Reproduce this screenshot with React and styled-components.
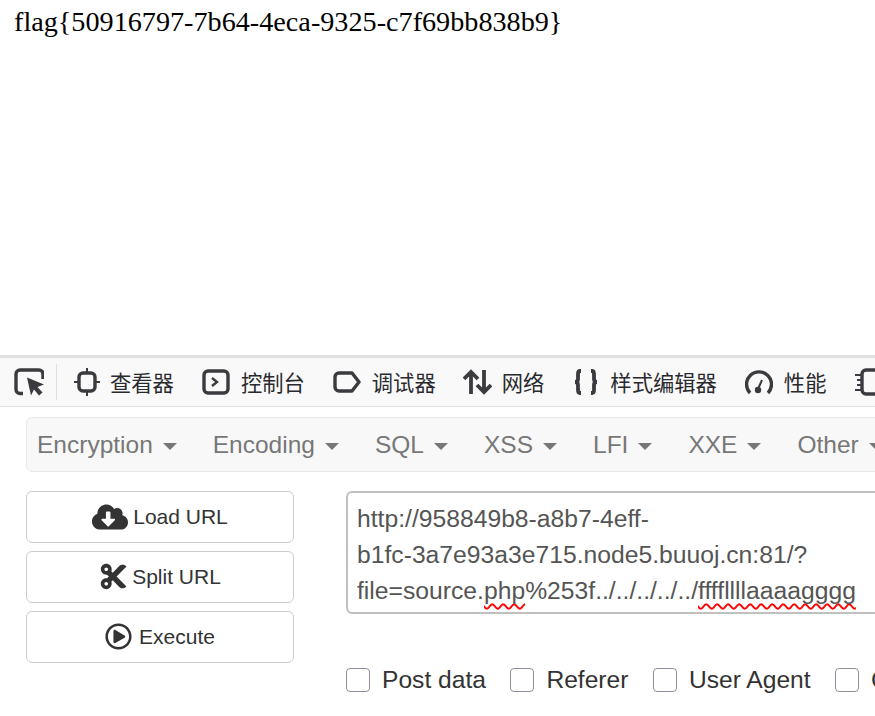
import React from "react";
import styled, { createGlobalStyle } from "styled-components";
import { FaCloudDownloadAlt, FaCut, FaRegPlayCircle } from "react-icons/fa";

const Global = createGlobalStyle`
  html, body {
    margin: 0;
    width: 875px;
    height: 716px;
    overflow: hidden;
    background: #fff;
  }
`;
const Page = styled.div`
  width: 875px;
  height: 716px;
  overflow: hidden;
`;
const Flag = styled.div`
  height: 355px;
  box-sizing: border-box;
  padding: 6px 0 0 14px;
  font: 28.2px/32px "Liberation Serif", serif;
  color: #000;
`;
const Devtools = styled.div`
  display: flex;
  align-items: center;
  height: 52px;
  box-sizing: border-box;
  border-top: 3px solid #e0e0e2;
  border-bottom: 1px solid #e0e0e2;
  background: #f9f9fa;
  padding-left: 14px;
  white-space: nowrap;
  svg {
    flex: none;
    display: block;
  }
`;
const Divider = styled.div`
  width: 1px;
  height: 36px;
  background: #e0e0e2;
  margin: 0 16px 0 12px;
  flex: none;
`;
const Tool = styled.div`
  display: flex;
  align-items: center;
  flex: none;
  gap: ${(p) => p.$gap}px;
  margin-right: ${(p) => p.$after}px;
  font: 21.3px "Noto Sans CJK SC", sans-serif;
  color: #2a2a2e;
`;
const ToolLabel = styled.span`
  padding-bottom: 2px;
`;
const Nav = styled.div`
  display: flex;
  align-items: center;
  gap: 36px;
  margin: 10px 0 19px 26px;
  width: 900px;
  height: 55px;
  box-sizing: border-box;
  padding-left: 10px;
  background: #f8f8f8;
  border: 1px solid #e7e7e7;
  border-radius: 6px;
  white-space: nowrap;
`;
const NavItem = styled.div`
  display: flex;
  align-items: center;
  gap: 10px;
  flex: none;
  font: 24.5px "Liberation Sans", sans-serif;
  color: #777;
`;
const Caret = styled.span`
  width: 0;
  height: 0;
  margin-top: 3px;
  border-top: 7px solid #777;
  border-left: 7px solid transparent;
  border-right: 7px solid transparent;
`;
const Main = styled.div`
  display: flex;
  gap: 52px;
  padding-left: 26px;
`;
const Buttons = styled.div`
  display: flex;
  flex-direction: column;
  gap: 8.5px;
  width: 268px;
  flex: none;
`;
const Button = styled.div`
  display: flex;
  align-items: center;
  justify-content: center;
  gap: ${(p) => p.$gap}px;
  height: 51.5px;
  box-sizing: border-box;
  border: 1px solid #ccc;
  border-radius: 6px;
  background: #fff;
  font: 21px "Liberation Sans", sans-serif;
  color: #333;
`;
const Right = styled.div`
  flex: none;
  width: 560px;
`;
const UrlBox = styled.div`
  height: 123px;
  box-sizing: border-box;
  padding: 8px 0 0 9px;
  border: 2px solid #c0c0c0;
  border-radius: 6px;
  font: 24.7px/36px "Liberation Sans", sans-serif;
  color: #555;
`;
const UrlLine = styled.div`
  white-space: nowrap;
`;
const Typo = styled.span`
  text-decoration: underline wavy #f00;
  text-decoration-thickness: 1.5px;
  text-decoration-skip-ink: none;
  text-underline-offset: 4px;
`;
const Options = styled.div`
  display: flex;
  gap: 24.5px;
  margin-top: 52px;
  white-space: nowrap;
`;
const Option = styled.label`
  display: flex;
  align-items: center;
  gap: 12px;
  flex: none;
  font: 24.6px "Liberation Sans", sans-serif;
  color: #333;
`;
const Box = styled.span`
  width: 24px;
  height: 24px;
  box-sizing: border-box;
  border: 1px solid #8f8f9d;
  border-radius: 4px;
  background: #fff;
`;

const ic = { fill: "none", stroke: "#3b3b3f", strokeWidth: 3.4 };

const PickIcon = () => (
  <svg width="30" height="28" viewBox="0 0 30 28">
    <path d="M9 25.5H6a4 4 0 0 1-4-4V6a4 4 0 0 1 4-4h19a4 4 0 0 1 4 4v5" {...ic} />
    <path d="M13 9.5l17 7-6.5 2.5 5 5.500-3.500 3-5-6-3 6z" fill="#3b3b3f" />
  </svg>
);
const InspectIcon = () => (
  <svg width="28" height="28" viewBox="0 0 28 28">
    <rect x="6" y="5" width="16" height="18" rx="4" {...ic} />
    <path d="M14 0v5M14 23v5M1 14h5M22 14h5" {...ic} strokeWidth="2" />
  </svg>
);
const ConsoleIcon = () => (
  <svg width="28" height="26" viewBox="0 0 28 26">
    <rect x="2" y="2" width="24" height="22" rx="4" {...ic} />
    <path d="M10 9l5 4-5 4" {...ic} strokeWidth="2.4" />
  </svg>
);
const DebugIcon = () => (
  <svg width="28" height="22" viewBox="0 0 28 22">
    <path d="M6 2h13l7 9-7 9H6a4 4 0 0 1-4-4V6a4 4 0 0 1 4-4z" {...ic} strokeLinejoin="round" />
  </svg>
);
const NetIcon = () => (
  <svg width="29" height="26" viewBox="0 0 29 26">
    <path d="M8 25V3M1 10l7-7 7 7" {...ic} strokeWidth="3.8" />
    <path d="M21 1v22M14 16l7 7 7-7" {...ic} strokeWidth="3.8" />
  </svg>
);
const StyleIcon = () => (
  <svg width="26" height="26" viewBox="0 0 26 26">
    <path d="M8 2H7C5 2 5 4 5 5v5c0 2-1 3-3 3 2 0 3 1 3 3v5c0 1 0 3 2 3h1" {...ic} strokeWidth="3.8" />
    <path d="M18 2h1c2 0 2 2 2 3v5c0 2 1 3 3 3-2 0-3 1-3 3v5c0 1 0 3-2 3h-1" {...ic} strokeWidth="3.8" />
  </svg>
);
const PerfIcon = () => (
  <svg width="28" height="26" viewBox="0 0 28 26">
    <path d="M5 24A12.500 12.500 0 1 1 23 24" {...ic} />
    <circle cx="13" cy="21" r="3.200" fill="#3b3b3f" />
    <path d="M13 20l4-9" {...ic} strokeWidth="2" />
  </svg>
);
const MemIcon = () => (
  <svg width="30" height="28" viewBox="0 0 30 28">
    <rect x="8" y="2" width="18" height="24" rx="4" {...ic} />
    <path d="M1 7h7M3 12h5M3 17h5M1 22h7" {...ic} strokeWidth="2" />
  </svg>
);

const tools = [
  { Icon: InspectIcon, label: "查看器", gap: 9, after: 28 },
  { Icon: ConsoleIcon, label: "控制台", gap: 11, after: 28 },
  { Icon: DebugIcon, label: "调试器", gap: 11, after: 27 },
  { Icon: NetIcon, label: "网络", gap: 10, after: 29 },
  { Icon: StyleIcon, label: "样式编辑器", gap: 11, after: 28 },
  { Icon: PerfIcon, label: "性能", gap: 11, after: 28 },
  { Icon: MemIcon, label: "内存", gap: 11, after: 28 },
];

const navItems = ["Encryption", "Encoding", "SQL", "XSS", "LFI", "XXE", "Other"];
const options = ["Post data", "Referer", "User Agent", "Cookies"];

export default function App() {
  return (
    <Page>
      <Global />
      <Flag>flag{"{50916797-7b64-4eca-9325-c7f69bb838b9}"}</Flag>
      <Devtools>
        <PickIcon />
        <Divider />
        {tools.map(({ Icon, label, after, gap }) => (
          <Tool key={label} $after={after} $gap={gap}>
            <Icon />
            <ToolLabel>{label}</ToolLabel>
          </Tool>
        ))}
      </Devtools>
      <Nav>
        {navItems.map((item) => (
          <NavItem key={item}>
            {item}
            <Caret />
          </NavItem>
        ))}
      </Nav>
      <Main>
        <Buttons>
          <Button $gap={5}>
            <FaCloudDownloadAlt size={36} />
            Load URL
          </Button>
          <Button $gap={4}>
            <FaCut size={29} />
            Split URL
          </Button>
          <Button $gap={7}>
            <FaRegPlayCircle size={27} />
            Execute
          </Button>
        </Buttons>
        <Right>
          <UrlBox>
            <UrlLine>http://958849b8-a8b7-4eff-</UrlLine>
            <UrlLine>b1fc-3a7e93a3e715.node5.buuoj.cn:81/?</UrlLine>
            <UrlLine>
              file=source.<Typo>php</Typo>%253f../../../../../<Typo>ffffllllaaaagggg</Typo>
            </UrlLine>
          </UrlBox>
          <Options>
            {options.map((o) => (
              <Option key={o}>
                <Box />
                {o}
              </Option>
            ))}
          </Options>
        </Right>
      </Main>
    </Page>
  );
}
